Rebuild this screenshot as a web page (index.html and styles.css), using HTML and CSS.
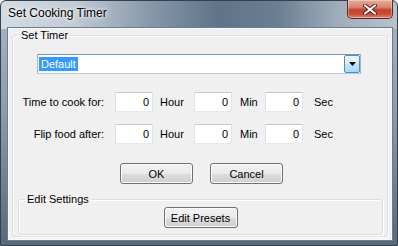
FILE: index.html
```html
<!DOCTYPE html>
<html>
  <head>
    <meta charset="utf-8">
    <title>Set Cooking Timer</title>
    <link rel="stylesheet" href="styles.css">
  </head>
  <body>
    <div class="window">
      <div class="titlebar">
        <span class="title">Set Cooking Timer</span>
        <span class="close">
          <svg width="14" height="11" viewBox="0 0 14 11">
            <path d="M2 1.5 L12 9.5 M12 1.5 L2 9.5" stroke="#5a1d14" stroke-width="4" stroke-linecap="round"/>
            <path d="M2 1.5 L12 9.5 M12 1.5 L2 9.5" stroke="#fff" stroke-width="2.2" stroke-linecap="round"/>
          </svg>
        </span>
      </div>

      <div class="client">
        <fieldset class="group timer">
          <legend>Set Timer</legend>

          <div class="combo">
            <span class="combo-text"><span class="sel">Default</span></span>
            <span class="combo-btn">
              <svg width="7" height="4" viewBox="0 0 7 4"><path d="M0 0 H7 L3.5 4 Z" fill="#000"/></svg>
            </span>
          </div>

          <div class="row first">
            <span class="lbl">Time to cook for:</span>
            <span class="num">0</span><span class="unit u-hour">Hour</span>
            <span class="num">0</span><span class="unit u-min">Min</span>
            <span class="num">0</span><span class="unit u-sec">Sec</span>
          </div>
          <div class="row second">
            <span class="lbl">Flip food after:</span>
            <span class="num">0</span><span class="unit u-hour">Hour</span>
            <span class="num">0</span><span class="unit u-min">Min</span>
            <span class="num">0</span><span class="unit u-sec">Sec</span>
          </div>

          <div class="buttons">
            <button class="btn">OK</button>
            <button class="btn">Cancel</button>
          </div>

          <fieldset class="group settings">
            <legend>Edit Settings</legend>
            <button class="btn presets">Edit Presets</button>
          </fieldset>
        </fieldset>
      </div>
    </div>
  </body>
</html>
```

FILE: styles.css
```css
*{
  margin: 0;
  padding: 0;
  box-sizing: border-box;
}
body{
  width: 398px;
  height: 246px;
  overflow: hidden;
  font-family: "Liberation Sans", Arial, sans-serif;
  font-size: 11px;
  color: #000;
  background: #fff;
}

/* window frame */
.window{
  width: 398px;
  height: 246px;
  display: flex;
  flex-direction: column;
  padding: 0 5px 5px 7px;
  border: 1px solid #34404c;
  border-radius: 6px 6px 0 0;
  background:
    linear-gradient(to right, #d3dbe3 0%, #c3ccd6 18%, #8597a9 38%, #5f7489 55%, #6a7f93 70%, #9fadbb 85%, #b7c2cd 100%) top left / 100% 28px no-repeat,
    linear-gradient(to bottom, #aab6c2 0%, #8d9cab 45%, #56687b 100%);
}
.titlebar{
  height: 27px;
  display: flex;
  justify-content: space-between;
  align-items: flex-start;
}
.title{
  margin-top: 5px;
  font-size: 12px;
  line-height: 14px;
  color: #000;
  text-shadow: 0 0 6px #fff, 0 0 3px #fff;
}
.close{
  width: 46px;
  height: 19px;
  margin: -1px -1px 0 0;
  display: flex;
  align-items: center;
  justify-content: center;
  border: 1px solid #5b2a24;
  border-top: none;
  border-radius: 0 0 5px 5px;
  background: linear-gradient(to bottom, #e9aa9a 0%, #d88571 40%, #c24329 55%, #c9503a 80%, #dc8a70 100%);
  box-shadow: inset 0 0 0 1px rgba(255,255,255,0.35);
}

/* client area */
.client{
  flex: 1;
  display: flex;
  flex-direction: column;
  background: #f0f0f0;
  border: 1px solid #f7f9fb;
  box-shadow: 0 0 0 1px #6b7c8d;
}

/* group boxes */
.group{
  border: 1px solid #d5dfe5;
  border-radius: 3px;
  box-shadow: inset 1px 1px 0 #fff, 1px 1px 0 #fff;
  min-width: 0;
}
.group legend{
  margin-left: 6px;
  padding: 0 2px;
  font-size: 11px;
  line-height: 13px;
}
.timer{
  flex: 1;
  margin: 0 3px 2px 3px;
  display: flex;
  flex-direction: column;
}
.settings{
  margin: 9px 4px 0 5px;
  padding-bottom: 6px;
  display: flex;
  justify-content: center;
}

/* combo box */
.combo{
  height: 20px;
  margin: 12px 26px 0 24px;
  display: flex;
  background: #fff;
  border: 1px solid;
  border-color: #7a98b4 #9db6cb #b7cbdc #9db6cb;
}
.combo-text{
  flex: 1;
  padding: 2px 0 0 1px;
}
.sel{
  display: inline-block;
  height: 14px;
  padding: 0 2px;
  line-height: 14px;
  color: #fff;
  background: #3399ff;
}
.combo-btn{
  width: 16px;
  display: flex;
  align-items: center;
  justify-content: center;
  border: 1px solid #5c8ab1;
  border-radius: 2px;
  background: linear-gradient(to bottom, #eaf6fd 0%, #d9f0fc 45%, #bee6fd 50%, #a7d9f5 100%);
}

/* time rows */
.row{
  height: 20px;
  display: flex;
  align-items: center;
}
.row.first{
  margin-top: 18px;
}
.row.second{
  margin-top: 12px;
}
.lbl{
  width: 91px;
  margin-right: 11px;
  text-align: right;
}
.num{
  width: 38px;
  height: 20px;
  padding-right: 3px;
  line-height: 18px;
  text-align: right;
  background: #fff;
  border: 1px solid;
  border-color: #c6c9ce #e2e3ea #e3e9ef #e2e3ea;
}
.unit{
  padding-left: 7px;
}
.u-hour{
  width: 41px;
}
.u-min{
  width: 33px;
  padding-left: 8px;
}
.u-sec{
  padding-left: 11px;
}

/* buttons */
.buttons{
  margin-top: 19px;
  padding-left: 3px;
  display: flex;
  justify-content: center;
  gap: 17px;
}
.btn{
  width: 73px;
  height: 21px;
  font-family: "Liberation Sans", Arial, sans-serif;
  font-size: 11px;
  color: #000;
  border: 1px solid #707070;
  border-radius: 3px;
  background: linear-gradient(to bottom, #f2f2f2 0%, #ebebeb 50%, #dddddd 51%, #cfcfcf 100%);
  box-shadow: inset 0 0 0 1px #fcfcfc;
}
.presets{
  width: 74px;
  margin-top: 1px;
}
```
